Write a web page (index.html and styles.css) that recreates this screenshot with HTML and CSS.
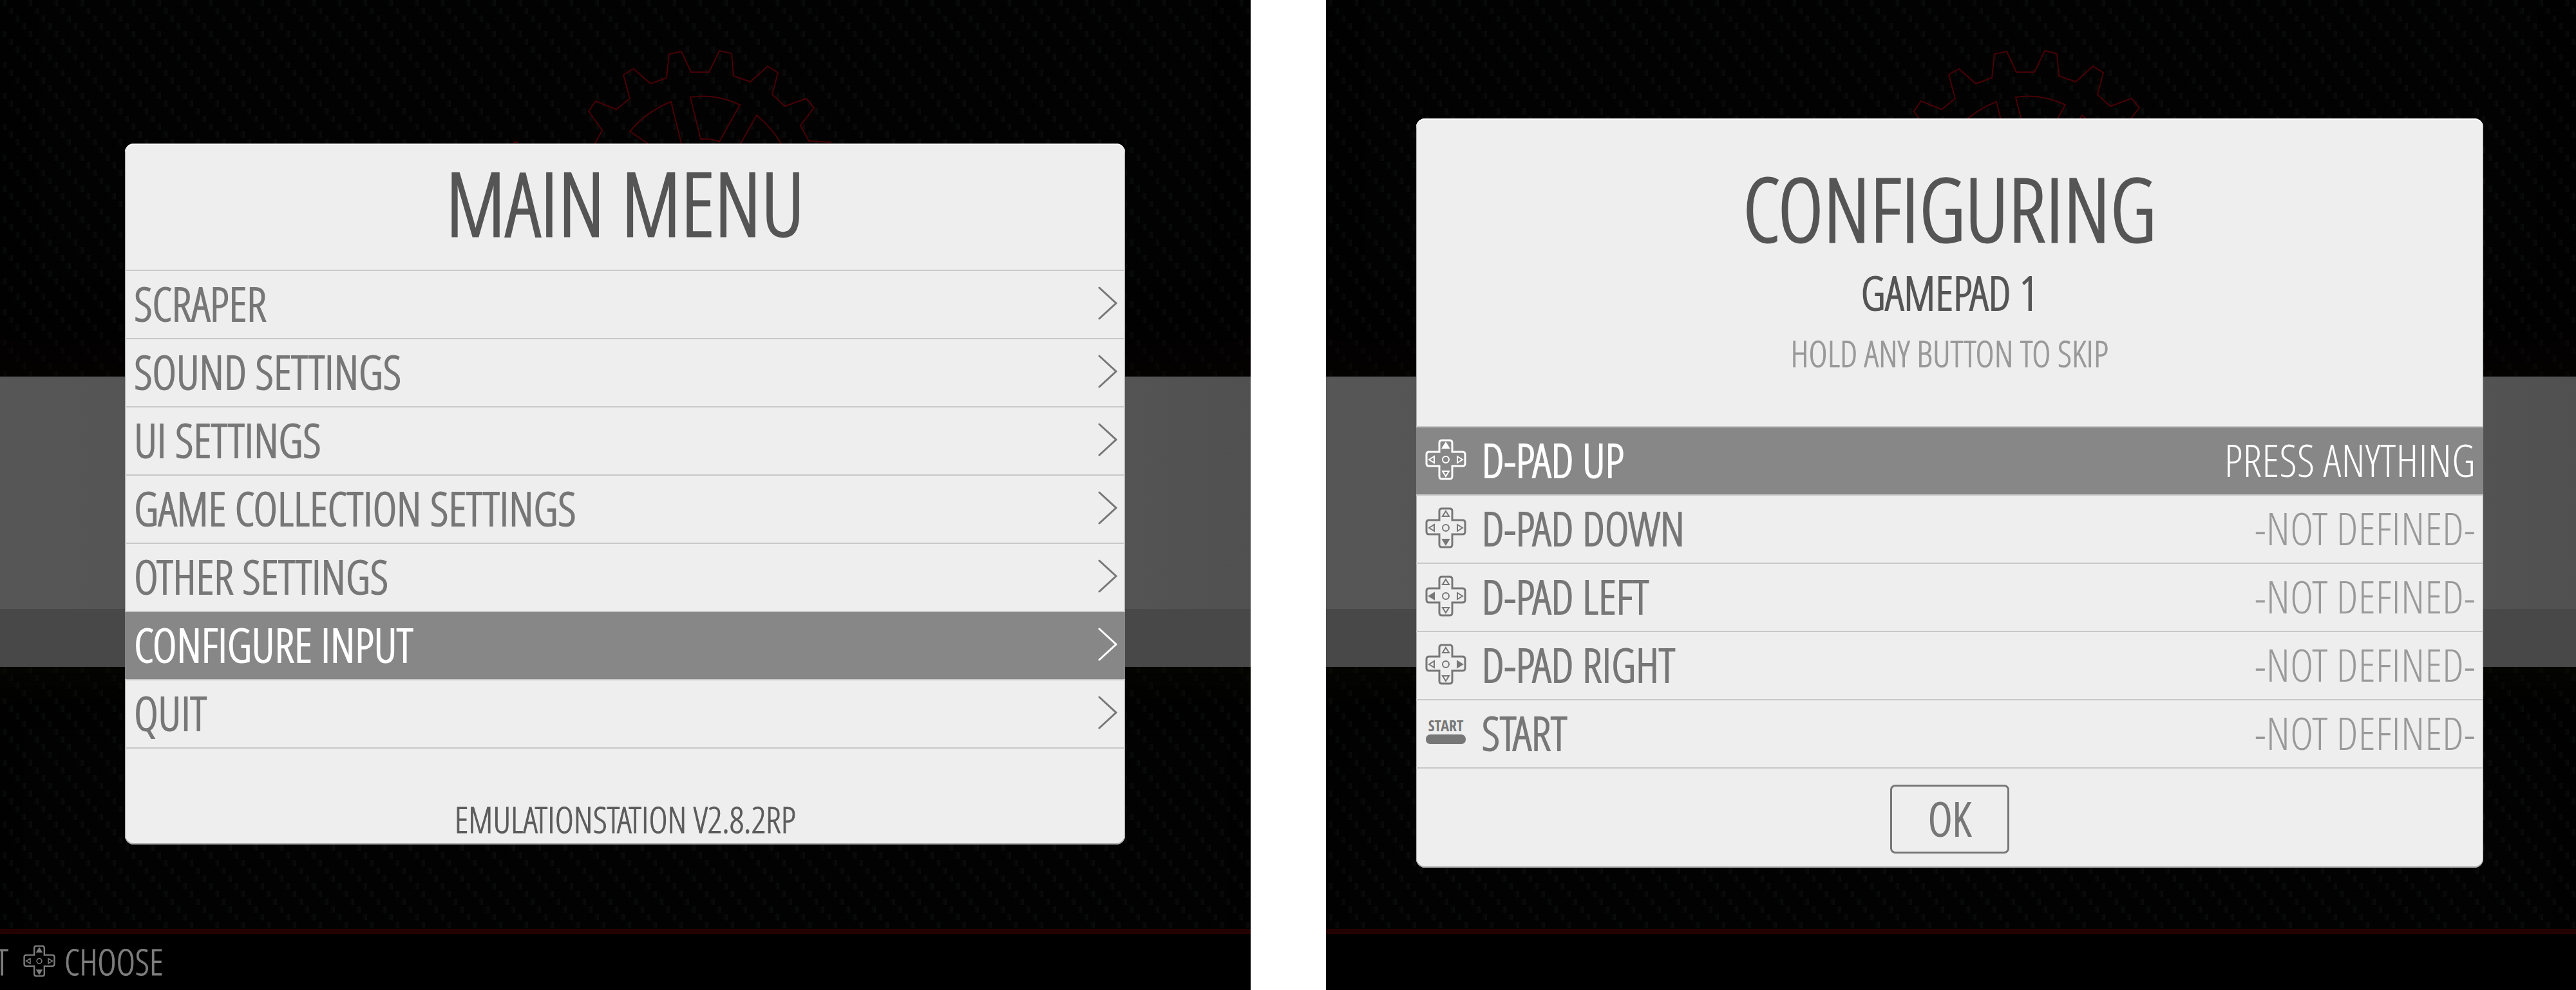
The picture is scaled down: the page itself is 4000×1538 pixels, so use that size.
FILE: index.html
```html
<!DOCTYPE html>
<html lang="en">
<head>
<meta charset="utf-8">
<title>EmulationStation</title>
<link rel="stylesheet" href="styles.css">
</head>
<body>
<svg class="defs" aria-hidden="true">
  <defs>
    <g id="pad">
      <path d="M22 20V6q0-4 4-4h12q4 0 4 4v14h16q4 0 4 4v14q0 4-4 4H42v16q0 4-4 4H26q-4 0-4-4V42H6q-4 0-4-4V24q0-4 4-4z"/>
      <circle cx="32" cy="32" r="5" stroke-width="2"/>
    </g>
    <path id="up" stroke-width="2" d="M32 6l5 8H27z"/>
    <path id="down" stroke-width="2" d="M32 58l5-8H27z"/>
    <path id="left" stroke-width="2" d="M6 32l8-5v10z"/>
    <path id="right" stroke-width="2" d="M58 32l-8-5v10z"/>
    <g id="gear">
      <path d="M797 221h8M924 223L935 202 914 173 925 157 957 170 978 153 968 116 984 107 1010 130 1035 121 1039 84 1058 80 1073 112H1101L1117 79 1136 83 1139 118 1165 127 1192 103 1208 113 1199 147 1219 165 1252 153 1264 167 1243 195 1256 219 1291 221"/>
      <path d="M1006 223L978 204Q1004 173 1042 158L1058 223M1072 151Q1112 145 1149 163L1117 220Q1102 215 1088 216ZM1150 223L1175 179Q1198 198 1213 223"/>
    </g>
    <path id="chevron" d="M2 2l26 24L2 50"/>
  </defs>
</svg>
<div class="screens">
  <section class="screen">
    <div class="backdrop">
      <div class="weave weave-top"><svg class="gear" viewBox="777 0 530 260"><use href="#gear"/></svg></div>
      <div class="band"></div>
      <div class="band band-info"></div>
      <div class="weave weave-bottom"></div>
      <div class="help">
        <span class="help-cut">T</span>
        <svg class="help-pad" viewBox="0 0 64 64"><use href="#pad"/><use class="solid" href="#up"/><use class="solid" href="#down"/><use href="#left"/><use href="#right"/></svg>
        <span>CHOOSE</span>
      </div>
    </div>
    <main class="dialog dialog-menu">
      <h1 class="title">MAIN MENU</h1>
      <ul class="rows">
        <li><button class="row" type="button">SCRAPER<svg class="chevron" viewBox="0 0 30 52"><use href="#chevron"/></svg></button></li>
        <li><button class="row" type="button">SOUND SETTINGS<svg class="chevron" viewBox="0 0 30 52"><use href="#chevron"/></svg></button></li>
        <li><button class="row" type="button">UI SETTINGS<svg class="chevron" viewBox="0 0 30 52"><use href="#chevron"/></svg></button></li>
        <li><button class="row" type="button">GAME COLLECTION SETTINGS<svg class="chevron" viewBox="0 0 30 52"><use href="#chevron"/></svg></button></li>
        <li><button class="row" type="button">OTHER SETTINGS<svg class="chevron" viewBox="0 0 30 52"><use href="#chevron"/></svg></button></li>
        <li><button class="row selected" type="button">CONFIGURE INPUT<svg class="chevron" viewBox="0 0 30 52"><use href="#chevron"/></svg></button></li>
        <li><button class="row" type="button">QUIT<svg class="chevron" viewBox="0 0 30 52"><use href="#chevron"/></svg></button></li>
      </ul>
      <p class="version">EMULATIONSTATION V2.8.2RP</p>
    </main>
  </section>

  <section class="screen">
    <div class="backdrop">
      <div class="weave weave-top"><svg class="gear" viewBox="777 0 530 260"><use href="#gear"/></svg></div>
      <div class="band"></div>
      <div class="band band-info"></div>
      <div class="weave weave-bottom"></div>
      <div class="help"></div>
    </div>
    <div class="dialog dialog-input">
      <header class="heading">
        <h2 class="title">CONFIGURING</h2>
        <p class="device">GAMEPAD 1</p>
        <p class="hint">HOLD ANY BUTTON TO SKIP</p>
      </header>
      <ul class="rows">
        <li><button class="row selected" type="button"><svg class="icon" viewBox="0 0 64 64"><use href="#pad"/><use class="solid" href="#up"/><use href="#down"/><use href="#left"/><use href="#right"/></svg>D-PAD UP<span class="value">PRESS ANYTHING</span></button></li>
        <li><button class="row" type="button"><svg class="icon" viewBox="0 0 64 64"><use href="#pad"/><use href="#up"/><use class="solid" href="#down"/><use href="#left"/><use href="#right"/></svg>D-PAD DOWN<span class="value">-NOT DEFINED-</span></button></li>
        <li><button class="row" type="button"><svg class="icon" viewBox="0 0 64 64"><use href="#pad"/><use href="#up"/><use href="#down"/><use class="solid" href="#left"/><use href="#right"/></svg>D-PAD LEFT<span class="value">-NOT DEFINED-</span></button></li>
        <li><button class="row" type="button"><svg class="icon" viewBox="0 0 64 64"><use href="#pad"/><use href="#up"/><use href="#down"/><use href="#left"/><use class="solid" href="#right"/></svg>D-PAD RIGHT<span class="value">-NOT DEFINED-</span></button></li>
        <li><button class="row" type="button"><svg class="icon" viewBox="0 0 64 64"><text class="icon-text" x="32" y="30">START</text><rect class="pill" x="1" y="35" width="62" height="15" rx="7"/></svg>START<span class="value">-NOT DEFINED-</span></button></li>
      </ul>
      <div class="actions"><button class="ok" type="button">OK</button></div>
    </div>
  </section>
</div>
</body>
</html>
```
FILE: styles.css
```css
* {
  box-sizing: border-box;
}

body {
  margin: 0;
  background: #fff;
  font-family: "Open Sans Condensed Light", "Open Sans Condensed", "Roboto Condensed", sans-serif;
  font-weight: 300;
  font-size: 72px;
  color: #777;
}

h1, h2, p, ul {
  margin: 0;
  padding: 0;
  font-weight: 300;
}

ul {
  list-style: none;
}

.defs {
  display: block;
  width: 0;
  height: 0;
}

/* Two screens side by side */
.screens {
  display: grid;
  grid-template-columns: 1fr 1fr;
  gap: 117px;
  min-height: 100vh;
}

.screen {
  display: grid;
  overflow: hidden;
  background: #000;
}

.backdrop,
.dialog {
  grid-area: 1 / 1;
}

/* Dimmed theme behind the dialog */
.backdrop {
  display: grid;
  grid-template-rows: 585fr 361fr 90fr 407fr 95px;
}

/* Carbon fibre: short threads, each step down and to the right */
.weave {
  background-color: #020202;
  background-image:
    linear-gradient(to right, #020202 20%, transparent 90%),
    repeating-linear-gradient(to bottom, transparent 0 10px, #010101 10px 12px),
    conic-gradient(from 0deg at 10px 12px, transparent 270deg, #0a0b0b 270deg),
    conic-gradient(from 0deg at 10px 12px, transparent 270deg, #0a0b0b 270deg),
    conic-gradient(from 0deg at 10px 12px, transparent 270deg, #0a0b0b 270deg),
    conic-gradient(from 0deg at 10px 12px, transparent 270deg, #0a0b0b 270deg);
  background-size: 10px 12px, auto, 40px 48px, 40px 48px, 40px 48px, 40px 48px;
  background-position: 0 0, 0 0, 0 0, 10px 12px, 20px 24px, 30px 36px;
}

.weave-top {
  box-shadow: inset 0 -90px 90px -40px #0a020066;
}

.weave-bottom {
  box-shadow: inset 0 60px 60px -30px #0a0a0066;
}

.gear {
  display: block;
  width: 530px;
  height: 260px;
  margin-left: 40%;
  fill: none;
  stroke: #480006;
  stroke-width: 2;
}

.band {
  background: linear-gradient(to right, #565656, #505050 50%, #565656 85%, #505050);
}

.band-info {
  background: #484848;
}

.help {
  display: flex;
  align-items: center;
  gap: 14px;
  padding-bottom: 4px;
  border-top: 8px solid #240000;
  font-size: 56px;
  line-height: 80px;
  color: #7d7d7d;
  -webkit-text-stroke: 1px;
}

.help-cut {
  display: flex;
  justify-content: flex-end;
  width: 13px;
  overflow: hidden;
  margin-right: 9px;
}

.help-pad {
  width: 50px;
  height: 50px;
}

.help-pad,
.icon {
  flex: none;
  fill: none;
  stroke: currentColor;
  stroke-width: 3;
}

.solid {
  fill: currentColor;
}

/* Dialogs */
.dialog {
  place-self: center;
  background: #eee;
  border-radius: 14px;
  box-shadow: inset 0 2px #fff, inset 0 -2px #aaa, inset 0 0 0 1px #aaa;
}

.dialog-menu {
  width: 80%;
  margin-bottom: 4px;
}

.dialog-input {
  width: 1657px;
  max-width: 86%;
  margin: 0 4px 6px 0;
}

.title {
  font-size: 136px;
  line-height: 180px;
  text-align: center;
  color: #555;
  -webkit-text-stroke: 3px;
}

.dialog-menu .title {
  padding: 2px 0 14px;
  border-bottom: 2px solid #c8c8c8;
}

.heading {
  padding: 50px 0 60px;
  border-bottom: 2px solid #c8c8c8;
  text-align: center;
}

.device {
  line-height: 80px;
  color: #555;
  -webkit-text-stroke: 2px;
}

.hint {
  font-size: 56px;
  line-height: 108px;
  color: #999;
  -webkit-text-stroke: 1px;
}

.row {
  display: flex;
  align-items: center;
  width: 100%;
  height: 106px;
  padding: 0 12px 4px 14px;
  border: 0;
  border-bottom: 2px solid #c8c8c8;
  background: none;
  font: inherit;
  line-height: 98px;
  color: #777;
  -webkit-text-stroke: 2px;
}

.selected {
  background: #878787;
  color: #fff;
}

.chevron {
  width: 30px;
  height: 52px;
  margin-left: auto;
  fill: none;
  stroke: currentColor;
  stroke-width: 3;
  stroke-linecap: round;
}

.icon {
  width: 64px;
  height: 64px;
  margin-right: 24px;
}

.icon-text {
  font: 700 24px "Open Sans Condensed", "Open Sans", sans-serif;
  text-anchor: middle;
  fill: currentColor;
  stroke: none;
  -webkit-text-stroke: 0;
}

.pill {
  fill: currentColor;
  stroke: none;
}

.value {
  margin-left: auto;
  font-size: 70px;
  color: #999;
  -webkit-text-stroke: 0;
}

.selected .value {
  color: #fff;
}

.version {
  padding-top: 69px;
  font-size: 56px;
  line-height: 80px;
  text-align: center;
  color: #5c5c5c;
  -webkit-text-stroke: 1px;
}

.actions {
  display: flex;
  justify-content: center;
  padding: 25px 0 22px;
}

.ok {
  width: 185px;
  height: 107px;
  padding: 0 0 4px;
  border: 3px solid #777;
  border-radius: 8px;
  background: none;
  font: inherit;
  line-height: 96px;
  color: #777;
  -webkit-text-stroke: 2px;
}
```
